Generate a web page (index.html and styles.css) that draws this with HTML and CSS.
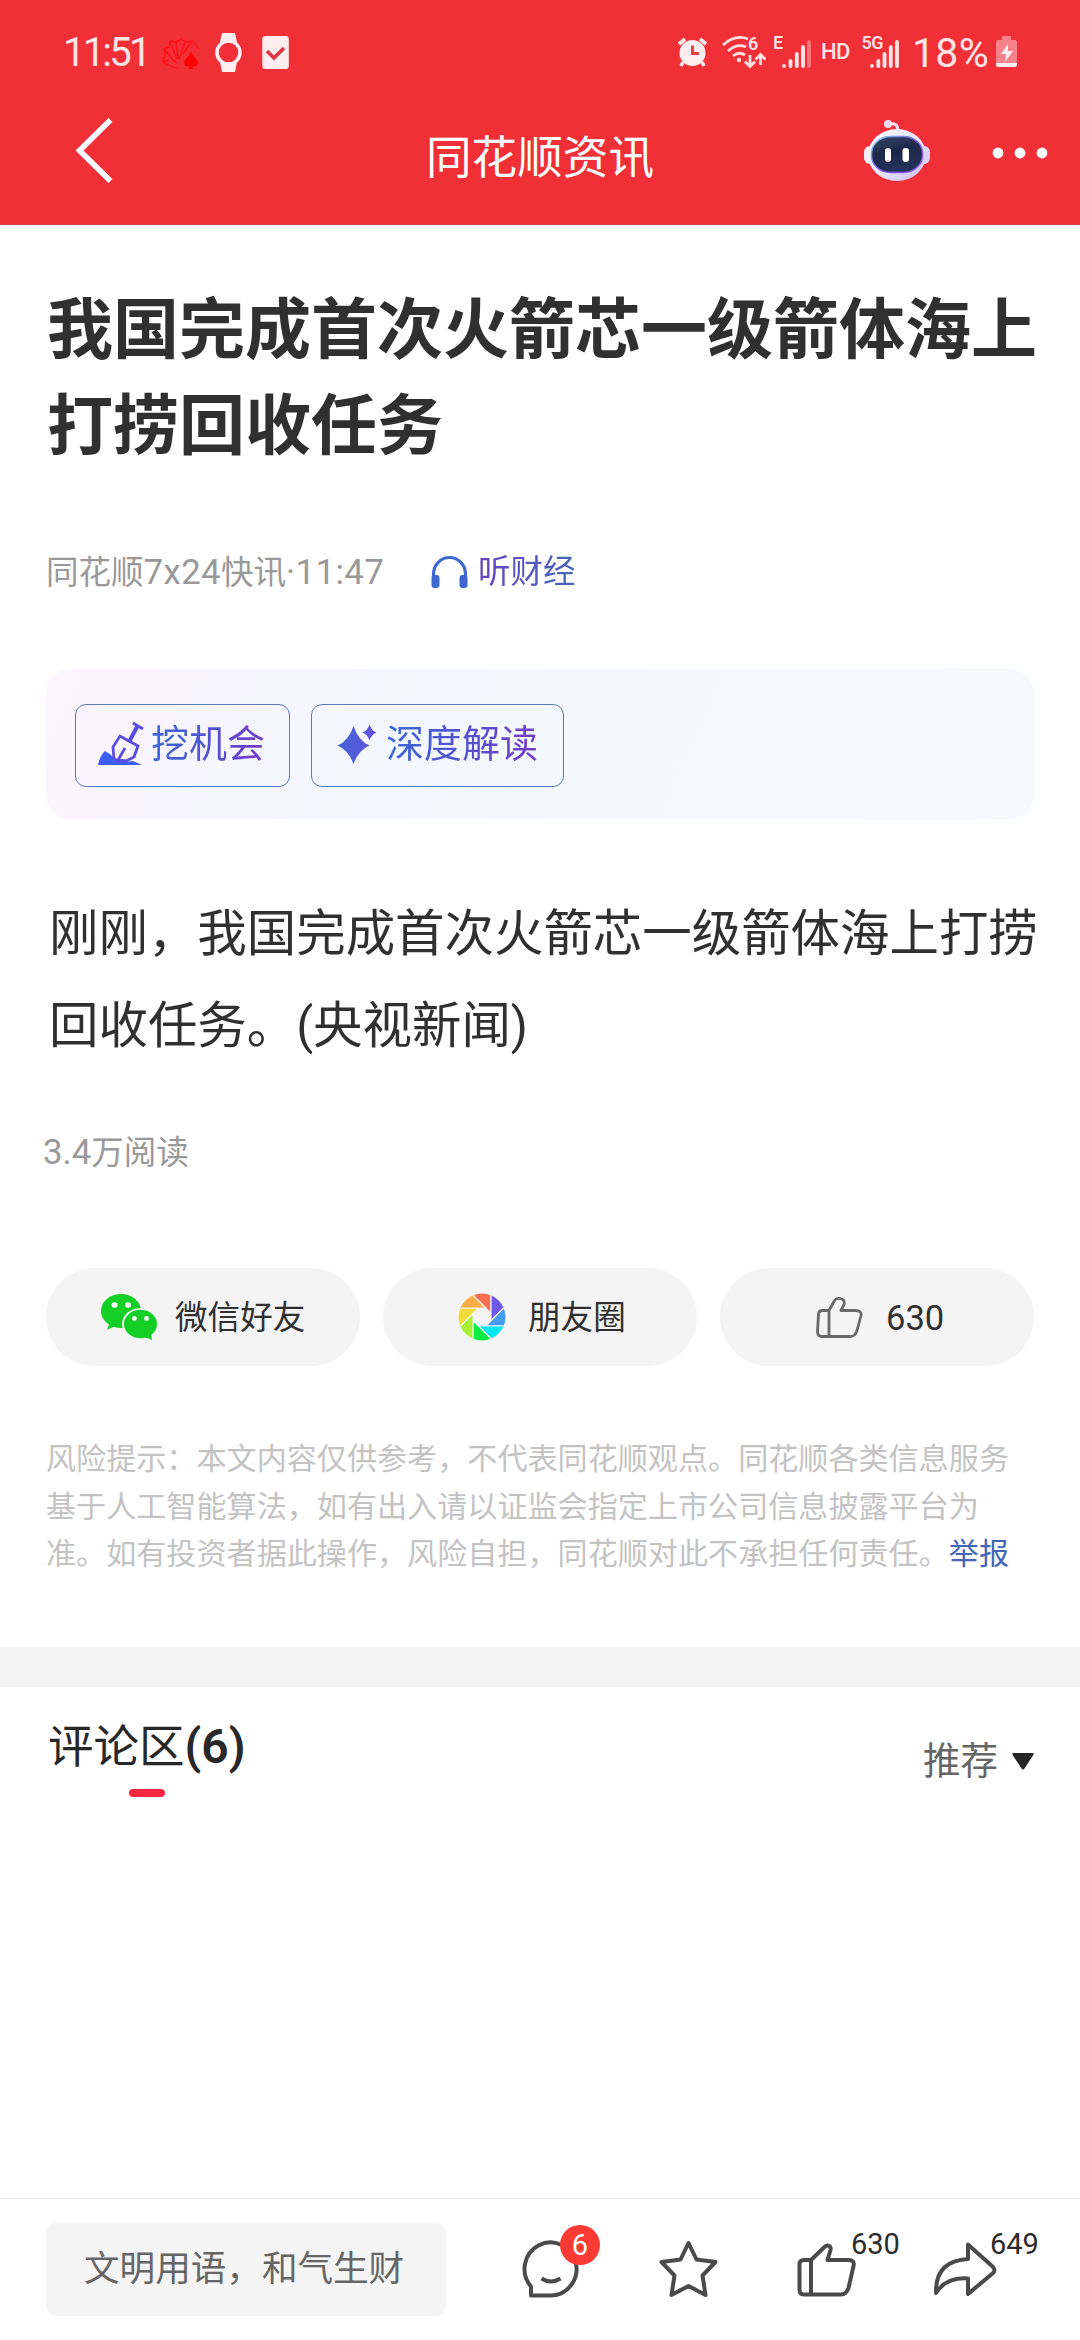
FILE: index.html
```html
<!DOCTYPE html>
<html lang="zh-CN">
<head>
<meta charset="utf-8">
<title>同花顺资讯</title>
<link rel="stylesheet" href="styles.css">
</head>
<body>
<div class="page">
  <header class="header">
    <div class="status">
      <div class="status-side">
        <span class="clock">11:51</span>
        <svg class="fan" width="40" height="40" viewBox="160 33 40 40"><g fill="none" stroke="#ff1116" stroke-width="1.500"><path d="M177 68q-8-1-15-6l2-6-1-7 5-2 1-6 6 1 5-3 5 3 6-1 7 8M163 49l12 14M169 42l7 17M175 42l2 17M184 42l-6 17M191 41l-9 13M162 62l6-2"/></g><path fill="#f00" d="M190 51c-1 5-7 8-7 12 0 3 4 5 6 2l-1.500 4h5l-1.500-4c2 3 6 1 6-2 0-4-6-7-7-12z"/></svg>
        <svg class="watch" width="28" height="40" viewBox="214 33 28 40"><path fill="#ffeef0" d="M221 33h13l2 9h-17zM219 62h17l-2 10h-13z"/><circle cx="227.500" cy="52.500" r="11.500" fill="none" stroke="#ffeef0" stroke-width="3.500"/></svg>
        <svg class="task" width="28" height="40" viewBox="261 33 28 40"><rect x="261.300" y="36" width="26.500" height="33" rx="3" fill="#ffeef0"/><path d="M266 51l7 7 10-10" fill="none" stroke="#dc3640" stroke-width="3.600"/></svg>
      </div>
      <div class="status-side">
        <svg class="alarm" width="30" height="40" viewBox="678 33 30 40"><circle cx="692.500" cy="53" r="13" fill="#ffeef0"/><path d="M679 44l6-5M706 44l-6-5M683 62l-2 4M702 62l2 4" stroke="#ffeef0" stroke-width="3.600"/><path d="M692.500 45.500v8h6.500" fill="none" stroke="#e43b43" stroke-width="2.800"/></svg>
        <svg class="wifi" width="44" height="40" viewBox="722 33 44 40"><g fill="none" stroke="#ffdfe1" stroke-width="2.800"><path d="M723 45q12-11 25-6M728 51q9-8 18-4M733 56q6-5 12-1"/><path d="M750 55v11M745 61.500l5 5 5-5M760.500 65V55M755.500 59.500l5-5 5 5"/></g><circle cx="739" cy="60" r="2.200" fill="#ffdfe1"/><text x="748" y="50" class="svg-num">6</text></svg>
        <svg class="sig-e" width="38" height="40" viewBox="774 33 38 40"><text x="773" y="49" class="svg-num">E</text><g stroke="#ffe4e6" stroke-width="3.800" stroke-linecap="round"><path d="M784 66v.1M790.500 66v-5M796.800 66V54M803 66V47"/><path d="M809 66V42" opacity=".4"/></g></svg>
        <span class="hd">HD</span>
        <svg class="sig-5g" width="38" height="40" viewBox="862 33 38 40"><text x="861.500" y="49" class="svg-num" textLength="22">5G</text><path d="M872 66v.1M878.300 66v-5M884.500 66V54M890.800 66V47M897 66V42" stroke="#ffe4e6" stroke-width="3.800" stroke-linecap="round"/></svg>
        <span class="percent">18%</span>
        <svg class="battery" width="22" height="40" viewBox="996 33 22 40"><path fill="#f88289" d="M1002 36h9v4h4q2 0 2 2v21h-21V42q0-2 2-2h4z"/><path fill="#ffeef0" d="M996 63h21v2q0 2-2 2h-17q-2 0-2-2zM1008 44l-7 10h5l-1 8 8-11h-5z"/></svg>
      </div>
    </div>
    <nav class="nav">
      <svg class="back" width="40" height="68" viewBox="75 117 40 68"><path d="M110.500 120L79.500 150.500 110.500 181" fill="none" stroke="#fff" stroke-width="5.600"/></svg>
      <h2 class="nav-title">同花顺资讯</h2>
      <div class="nav-tools">
        <svg width="68" height="64" viewBox="863 118 68 64"><defs><linearGradient id="shell" x2="1" y2="1"><stop stop-color="#fff"/><stop offset=".6" stop-color="#e6e0f9"/><stop offset="1" stop-color="#c8b9f1"/></linearGradient><linearGradient id="rim" x2="1" y2="1"><stop stop-color="#86d7ec"/><stop offset=".5" stop-color="#7355e6"/><stop offset="1" stop-color="#9b52f0"/></linearGradient><linearGradient id="visor" x2="0.300" y2="1"><stop stop-color="#3b4869"/><stop offset=".5" stop-color="#1c2648"/><stop offset="1" stop-color="#24335b"/></linearGradient></defs><path d="M889 124q9-2 9 7" fill="none" stroke="#f3dff0" stroke-width="3"/><circle cx="888" cy="124" r="4" fill="#f6dcec"/><rect x="864" y="146" width="12" height="18" rx="6" fill="#fbeefa"/><rect x="918" y="146" width="12" height="18" rx="6" fill="#dcd3f8"/><rect x="868" y="129" width="58" height="52" rx="29" ry="26" fill="url(#shell)"/><rect x="871.500" y="136.500" width="51" height="36" rx="19" ry="17" fill="url(#visor)" stroke="url(#rim)" stroke-width="1.500"/><rect x="885" y="148" width="6" height="14" rx="3" fill="#fff"/><rect x="902.500" y="148" width="6.500" height="14" rx="3" fill="#fff"/></svg>
        <svg width="56" height="12" viewBox="992 146.500 56 12"><g fill="#fff"><circle cx="998" cy="152.500" r="5.400"/><circle cx="1020" cy="152.500" r="5.400"/><circle cx="1042" cy="152.500" r="5.400"/></g></svg>
      </div>
    </nav>
  </header>

  <main class="article">
    <h1 class="title">我国完成首次火箭芯一级箭体海上打捞回收任务</h1>
    <div class="meta">
      <span class="source">同花顺<span class="latin">7x24</span>快讯<span class="latin">·11:47</span></span>
      <svg width="40" height="34" viewBox="430 555 40 34"><path d="M433.500 577v-3a16 16.500 0 0 1 32 0v3" fill="none" stroke="#3f6bd0" stroke-width="3.200"/><rect x="431.500" y="575" width="8" height="13" rx="3" fill="#3f66d2"/><rect x="459.500" y="575" width="8" height="13" rx="3" fill="#3f66d2"/></svg>
      <span class="listen">听财经</span>
    </div>
    <section class="ai-card">
      <button class="ai-btn ai-dig">
        <svg width="47" height="46" viewBox="97 720 47 46"><path fill="#3d5cf8" d="M98 764q2-10 7-14 4 2 8 6l12 5 8-1 9 4z"/><g fill="none" stroke="#5b4de0"><path stroke-width="2.800" d="M114 759l-1-13 7-11 18 10-4 11-8 4-8-1 7-12"/><path stroke-width="4" d="M129 741l8.500-16"/><path stroke-width="3" d="M133 722l10 6"/></g></svg>
        <span>挖机会</span>
      </button>
      <button class="ai-btn ai-deep">
        <svg width="40" height="42" viewBox="337 723 40 42"><defs><linearGradient id="spark" x2="1"><stop stop-color="#4564d8"/><stop offset="1" stop-color="#6353dc"/></linearGradient></defs><path fill="url(#spark)" d="M353.500 726Q358.500 741 369.500 745.500 358.500 750 353.500 764 348.500 750 337.500 745.500 348.500 741 353.500 726zM369.500 724.500Q371.500 730.500 376.500 732.500 371.500 734.500 369.500 740.500 367.500 734.500 362.500 732.500 367.500 730.500 369.500 724.500z"/></svg>
        <span>深度解读</span>
      </button>
    </section>
    <p class="content">刚刚，我国完成首次火箭芯一级箭体海上打捞<br>回收任务。(央视新闻)</p>
    <p class="reads"><span class="latin">3.4</span>万阅读</p>
    <div class="shares">
      <button class="pill pill-wechat">
        <svg width="58" height="48" viewBox="100 1295 58 48"><g fill="#14cf25"><ellipse cx="121" cy="1313" rx="20" ry="17"/><path d="M110 1324l-3 8 10-5z"/></g><ellipse cx="140" cy="1326" rx="18" ry="15.800" fill="#f4f4f4"/><g fill="#14cf25"><ellipse cx="140.500" cy="1326" rx="16.500" ry="14.300"/><path d="M142 1338l10 4-1-8z"/></g><g fill="#fff"><ellipse cx="114.500" cy="1307" rx="3" ry="2.800"/><ellipse cx="128" cy="1307" rx="3" ry="2.800"/><circle cx="134.500" cy="1320.500" r="2.400"/><circle cx="146.500" cy="1320.500" r="2.400"/></g></svg>
        <span>微信好友</span>
      </button>
      <button class="pill pill-moments">
        <svg width="48" height="48" viewBox="-24 -24 48 48"><defs><clipPath id="disc"><circle r="23.500"/></clipPath></defs><g clip-path="url(#disc)" stroke="#f4f4f4" stroke-width="1.200"><path fill="#fb6d50" d="M9-3.700V-30H-17.300z"/><path fill="#7058ee" d="M9-3.700V-30H-17.300z" transform="rotate(45)"/><path fill="#449df5" d="M9-3.700V-30H-17.300z" transform="rotate(90)"/><path fill="#07e6ef" d="M9-3.700V-30H-17.300z" transform="rotate(135)"/><path fill="#09ee42" d="M9-3.700V-30H-17.300z" transform="rotate(180)"/><path fill="#a9ef34" d="M9-3.700V-30H-17.300z" transform="rotate(225)"/><path fill="#f3dc38" d="M9-3.700V-30H-17.300z" transform="rotate(270)"/><path fill="#faae47" d="M9-3.700V-30H-17.300z" transform="rotate(315)"/></g></svg>
        <span>朋友圈</span>
      </button>
      <button class="pill pill-like">
        <svg width="48" height="46" viewBox="815 1294 48 46"><path d="M829 1310.500l5-9c2-5 12-4 10 3l-3 6h14q7 0 6 5l-4 15q-1.500 6-7 6h-28q-4.500 0-4.500-5l1-17q0-4 4-4zM829 1310.500v26" fill="none" stroke="#696969" stroke-width="2.800" stroke-linejoin="round"/></svg>
        <span class="pill-num">630</span>
      </button>
    </div>
    <p class="risk">风险提示：本文内容仅供参考，不代表同花顺观点。同花顺各类信息服务<br>基于人工智能算法，如有出入请以证监会指定上市公司信息披露平台为<br>准。如有投资者据此操作，风险自担，同花顺对此不承担任何责任。<a class="report">举报</a></p>
  </main>

  <section class="comments">
    <div class="comments-tab">
      <h3 class="comments-title">评论区<b>(6)</b></h3>
      <i class="tab-line"></i>
    </div>
    <div class="sort"><span>推荐</span><svg width="22" height="17" viewBox="0 0 22 17"><path d="M1.500 0h19q2 0 .8 2L12.500 15.500q-1.500 2-3 0L.7 2Q-.5 0 1.500 0z" fill="#262626"/></svg></div>
  </section>

  <footer class="footer">
    <div class="input">文明用语，和气生财</div>
    <div class="action chat">
      <svg width="60" height="60" viewBox="521 2240 60 60"><g fill="none" stroke="#4a4a4a" stroke-width="4"><path stroke-linejoin="round" d="M531 2295.500h20a26 26.500 0 1 0-20-9z"/><path d="M541.500 2278.500q9.500 6 19 0"/></g></svg>
      <span class="badge">6</span>
    </div>
    <svg class="star" width="62" height="60" viewBox="658 2239 62 60"><path fill="none" stroke="#4a4a4a" stroke-width="4" stroke-linejoin="round" d="M688.500 2243l8 16.500 19 2.500-13 13.500 3 19.500-17-9-17 9 3-19.500-13-13.500 19-2.500z"/></svg>
    <div class="action like">
      <svg width="62" height="56" viewBox="796 2242 62 56"><path fill="none" stroke="#4a4a4a" stroke-width="4" stroke-linejoin="round" d="M811 2260l13.500-13c3-3 7-1 6 3l-3 10h21q6.500 0 5 6l-5 22q-2 6.500-7.500 6.500h-37q-4.500 0-4.500-5v-25q0-4.500 4.500-4.500zM811 2260v34.500"/></svg>
      <span class="count">630</span>
    </div>
    <div class="action share">
      <svg width="66" height="58" viewBox="932 2241 66 58"><path fill="none" stroke="#4a4a4a" stroke-width="4" stroke-linejoin="round" d="M936 2293q-1-32 32-34v-14.500l24.500 22q4 3.500 0 7L968 2294v-15.500q-22-1.500-32 14.500z"/></svg>
      <span class="count">649</span>
    </div>
  </footer>
</div>
</body>
</html>
```

FILE: styles.css
```css
* { box-sizing: border-box; margin: 0; padding: 0; }
body {
  font-family: Roboto, "Noto Sans CJK SC", sans-serif;
  background: #fff;
  color: #303030;
}
svg { display: block; flex: none; }
button { border: 0; background: none; font: inherit; color: inherit; }
.page { display: flex; flex-direction: column; width: 1080px; height: 2340px; overflow: hidden; }

/* header */
.header { height: 225px; background: #f12f37; border-bottom: 1px solid #c9444c; color: #fff; }
.status { display: flex; justify-content: space-between; padding: 33px 62px 0 63px; height: 105px; }
.status-side { display: flex; height: 40px; }
.clock, .percent { font-size: 40px; line-height: 40px; color: #ffe4e6; white-space: nowrap; }
.clock { width: 98px; letter-spacing: -2.800px; }
.watch { margin-left: 14px; }
.task { margin-left: 19px; }
.wifi { margin-left: 14px; }
.sig-e { margin-left: 8px; }
.hd { width: 40px; margin-left: 9px; font-size: 22px; font-weight: 500; line-height: 38px; color: #ffe4e6; letter-spacing: -.5px; }
.sig-5g { margin-left: 1px; }
.percent { width: 84px; margin-left: 12px; font-size: 41px; letter-spacing: .3px; }
.svg-num { font-size: 18px; font-weight: 600; fill: #ffdfe1; }
.nav { display: grid; grid-template-columns: 1fr auto 1fr; height: 95px; padding: 0 32px 0 75px; }
.back { margin-top: 12px; }
.nav-title { font-size: 45.600px; font-weight: 400; line-height: 60px; margin: 24px 0 0 -43px; }
.nav-tools { display: flex; justify-content: flex-end; align-items: center; gap: 61px; height: 64px; margin-top: 13px; }
.nav-tools svg:last-child { margin-top: 5px; }

/* article */
.article { padding: 0 46px; }
.title {
  margin: 51px -10px 0 1px;
  font-family: "Noto Sans CJK SC", sans-serif;
  font-size: 66px;
  font-weight: 700;
  line-height: 96px;
  color: #303030;
}
.latin { font-size: 34.800px; }
.source .latin { letter-spacing: .4px; }
.meta { display: flex; align-items: center; height: 48px; margin-top: 80px; font-size: 32.500px; line-height: 48px; color: #999; white-space: nowrap; }
.source { width: 384px; }
.listen { margin-left: 8px; }
.listen, .ai-btn span { color: transparent; background: linear-gradient(90deg, #6a45c4, #4468b8); -webkit-background-clip: text; background-clip: text; }
.ai-card {
  display: flex;
  gap: 21px;
  height: 150px;
  margin-top: 73px;
  padding: 35px 29px;
  border-radius: 24px;
  background: linear-gradient(115deg, #fdf4fe 0%, #f6f5ff 18%, #f3f8ff 50%, #f5faff 100%);
}
.ai-btn { display: flex; align-items: center; height: 83px; border: 1.500px solid #5d7ab8; border-radius: 11px; font-size: 38px; line-height: 56px; white-space: nowrap; padding-bottom: 4px; }
.ai-dig { width: 215px; padding-left: 21px; }
.ai-dig span { margin-left: 7px; }
.ai-deep { width: 253px; padding-left: 25px; }
.ai-deep span { margin-left: 9px; }
.ai-btn span { background-image: linear-gradient(95deg, #3b69da, #5650cf 55%, #7a3ac8); }
.content { margin: 69px -10px 0 3px; font-size: 49.450px; line-height: 92px; white-space: nowrap; }
.reads { height: 48px; margin: 56px 0 0 -3px; font-size: 32.500px; line-height: 48px; color: #999; }
.shares { display: grid; grid-template-columns: repeat(3, 1fr); gap: 23px; margin-top: 92px; }
.pill { display: flex; align-items: center; height: 98px; border-radius: 49px; background: #f4f4f4; font-size: 32.600px; line-height: 48px; }
.pill span { margin-top: 1px; }
.pill-wechat { padding-left: 54px; gap: 17px; }
.pill-moments { padding-left: 75px; gap: 22px; }
.pill-like { padding-left: 95px; gap: 23px; }
.pill-num { font-size: 34.500px; }
.risk { margin: 69px 0 0; font-size: 30.100px; line-height: 47.500px; color: #c3c3c3; white-space: nowrap; }
.report { color: #4466b4; }

/* comments */
.comments { display: flex; justify-content: space-between; flex: 1; margin-top: 69px; padding: 28px 46px 0 48px; border-top: 40px solid #f4f4f4; }
.comments-title { height: 64px; font-size: 45.500px; font-weight: 400; line-height: 64px; color: #282828; }
.comments-title b { font-weight: 600; font-size: 48px; }
.tab-line { display: block; width: 36px; height: 8px; margin: 10px 0 0 81px; border-radius: 4px; background: #fc2840; }
.sort { display: flex; align-items: center; gap: 14px; height: 60px; margin-top: 17px; font-size: 37.500px; line-height: 54px; color: #666; }
.sort span { margin-top: -1px; }

/* footer */
.footer { display: flex; align-items: flex-start; height: 142px; padding: 24px 0 0 46px; border-top: 1px solid #e8e8e8; }
.input { width: 400px; height: 93px; padding-left: 38px; border-radius: 11px; background: #f5f5f5; font-size: 35.600px; line-height: 92px; color: #666; white-space: nowrap; }
.action { position: relative; }
.chat { margin: 17px 0 0 75px; }
.star { margin: 16px 0 0 77px; }
.like { margin: 19px 0 0 76px; }
.share { margin: 18px 0 0 74px; }
.badge { position: absolute; left: 39px; top: -15px; width: 40px; height: 40px; border-radius: 50%; background: #fb3a33; color: #fff; font-size: 29px; line-height: 40px; text-align: center; }
.count { position: absolute; left: 55px; top: -16px; font-size: 29px; line-height: 36px; color: #2c2c2c; }
.share .count { left: 58px; top: -15px; }
```
